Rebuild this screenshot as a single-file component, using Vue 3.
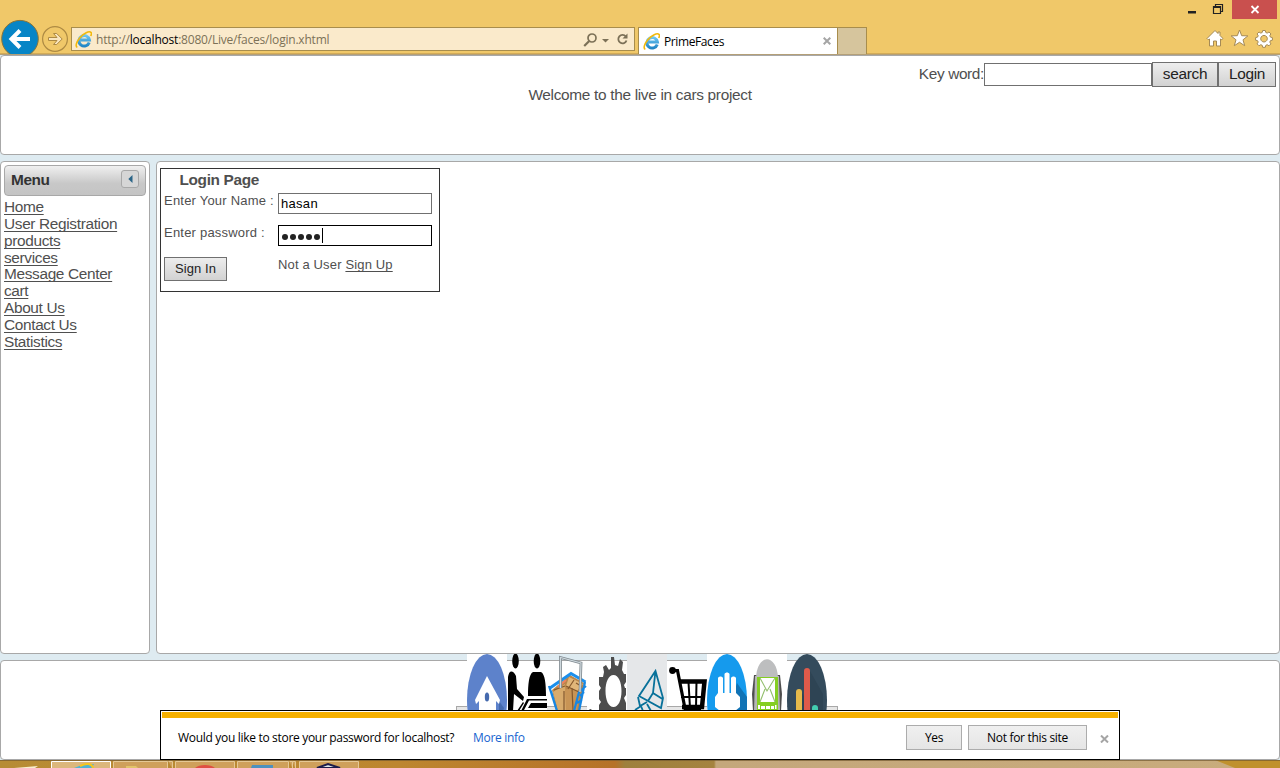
<script setup>
const menuItems = [
  'Home', 'User Registration', 'products', 'services', 'Message Center',
  'cart', 'About Us', 'Contact Us', 'Statistics'
]
</script>

<template>
  <div class="screen">
    <svg class="defs" width="0" height="0" aria-hidden="true">
      <defs>
        <linearGradient id="ieBlue" x1="0" y1="0" x2="0" y2="1">
          <stop offset="0" stop-color="#6cc6f2" /><stop offset="1" stop-color="#2186c6" />
        </linearGradient>
        <symbol id="ie" viewBox="0 0 16 16">
          <path d="M13.400 10.800A5 5 0 1 1 13.600 8.400H5.200" fill="none" stroke="url(#ieBlue)" stroke-width="2.800" />
          <path d="M2.200 15.200C.2 14.600 1 10.600 4.600 6.300S13.300-.2 15 1.200c.7.7.5 2-.2 3.500" fill="none" stroke="#f2b90c" stroke-width="1.500" />
        </symbol>
      </defs>
    </svg>

    <header class="chrome">
      <div class="window-buttons">
        <svg width="90" height="19" viewBox="0 0 90 19">
          <path d="M0 11h8v2.500H0z" fill="#222" />
          <path d="M25.500 6.500h7v7h-7zM25 7.500h8M27.500 6V4.500h7v7H33" fill="none" stroke="#222" stroke-width="1.200" />
          <path d="M44 0h45v19H44z" fill="#c9504e" />
          <path d="M63.500 6l7 7m0-7l-7 7" stroke="#fff" stroke-width="1.800" />
        </svg>
      </div>
      <div class="nav-row">
        <svg class="nav-arrows" width="71" height="35" viewBox="0 0 71 35">
          <circle cx="20" cy="19.700" r="18.300" fill="#0785c6" stroke="#8a7438" />
          <path d="M30 20H12M20 11.500L11.500 20l8.500 8.500" fill="none" stroke="#fff" stroke-width="4" />
          <circle cx="55" cy="20" r="12.400" fill="none" stroke="#ad8a43" stroke-width="1.200" />
          <path d="M48.500 18.500H57l-3.500-4h3.200l5.500 5.500-5.500 5.500h-3.200l3.500-4h-8.500z" fill="#f9e5bd" stroke="#ad8a43" />
        </svg>
        <div class="address">
          <svg class="ie-icon" width="17" height="17"><use href="#ie" /></svg>
          <span class="url">http://<b>localhost</b>:8080/Live/faces/login.xhtml</span>
          <svg class="address-tools" width="48" height="16" viewBox="0 0 48 16">
            <circle cx="9" cy="6" r="4" fill="none" stroke="#7c7157" stroke-width="1.700" />
            <path d="M6 9.200L1.200 14" stroke="#7c7157" stroke-width="2.200" />
            <path d="M19 7h7l-3.500 3.500z" fill="#7c7157" />
            <path d="M42.800 4.500A4.200 4.200 0 1 0 43.500 8.500" fill="none" stroke="#7c7157" stroke-width="1.800" />
            <path d="M44.500 1.500v5h-5z" fill="#7c7157" />
          </svg>
        </div>
        <div class="tab">
          <svg class="ie-icon" width="17" height="17"><use href="#ie" /></svg>
          <span class="tab-title">PrimeFaces</span>
          <svg class="tab-close" width="8" height="8" viewBox="0 0 8 8"><path d="M.7.7l6.600 6.600m0-6.600L.7 7.300" stroke="#a5a5a5" stroke-width="2" /></svg>
        </div>
        <div class="new-tab"></div>
        <svg class="tools" width="68" height="20" viewBox="0 0 68 20">
          <g fill="#fff" stroke="#a58a56" stroke-width="1" stroke-linejoin="round">
            <path d="M9 2.500L1 10.500l1.200 1.200L3.500 11v7h4v-5h3v5h4v-7l1.300.7 1.200-1.200-3-3V4h-2v1.500z" />
            <path d="M33.500 2l2.200 5.700 6.200.2-4.900 3.900 1.700 5.900-5.200-3.400-5.200 3.400 1.700-5.900-4.900-3.900 6.200-.2z" />
            <path fill-rule="evenodd" d="M56.700 2.500h2.600l.5 2 1.400.6 1.800-1.100 1.900 1.900-1.100 1.800.6 1.400 2 .5v2.600l-2 .5-.6 1.400 1.100 1.800-1.900 1.900-1.800-1.100-1.400.6-.5 2h-2.600l-.5-2-1.400-.6-1.800 1.100-1.900-1.900 1.100-1.800-.6-1.400-2-.5V9.600l2-.5.6-1.400-1.100-1.800L53 4l1.800 1.100 1.400-.6zM58 7.400a3.300 3.300 0 1 0 .01 0z" />
          </g>
        </svg>
      </div>
    </header>

    <main class="page">
      <section class="panel north">
        <div class="search-row">
          <span class="key-label">Key word:</span>
          <input class="field key-input" type="text" />
          <button class="btn search-btn">search</button>
          <button class="btn login-btn">Login</button>
        </div>
        <div class="welcome">Welcome to the live in cars project</div>
      </section>

      <div class="middle">
        <aside class="panel west">
          <div class="menu-head">
            <span>Menu</span>
            <i class="collapse"><svg width="5" height="8" viewBox="0 0 5 8"><path d="M4.500 0v8L.3 4z" fill="#2b6587" /></svg></i>
          </div>
          <nav class="menu-list">
            <a v-for="m in menuItems" :key="m">{{ m }}</a>
          </nav>
        </aside>
        <section class="panel center">
          <form class="login" @submit.prevent>
            <h1>Login Page</h1>
            <label>Enter Your Name :</label>
            <input class="field" type="text" value="hasan" />
            <label>Enter password :</label>
            <div class="field password"><i v-for="n in 5" :key="n"></i><b></b></div>
            <button class="btn sign-in">Sign In</button>
            <span class="sign-up">Not a User <a>Sign Up</a></span>
          </form>
        </section>
      </div>

      <section class="panel south">
        <div class="dock">
          <div class="dock-tray"></div>
          <svg class="dock-icons" width="360" height="57" viewBox="0 0 360 57">
            <path d="M0 0h40v57H0zM40 7h40v50H40zM120 7h40v50h-40zM240 0h80v57h-80z" fill="#fff" />
            <g>
              <ellipse cx="20" cy="46" rx="20" ry="46" fill="#5d82cb" />
              <path d="M32 47l5 7-1 3h-4z" fill="#456aae" />
              <path d="M20 22L8 46l1 4 3-3v10h17V47l3 3 1-4z" fill="#fff" />
              <ellipse cx="20" cy="43" rx="2.200" ry="4.500" fill="#456aae" />
            </g>
            <g>
              <ellipse cx="48.500" cy="7" rx="3.300" ry="7.500" />
              <ellipse cx="70" cy="7" rx="3.300" ry="7.500" />
              <path d="M41 57V23c1-7 5-7 8-1l1 13 7 8-1 4-9-7-1 17zM61 42c0-12 1-22 5-24h8c4 2 5 12 5 24zM60 45h20v1.500H62L56.500 57H54zM64 49h16v5H61zM50 57l6-9 1 1-5 8z" />
            </g>
            <g>
              <path d="M85 36l18-15 14 8-4 28H90z" fill="#b98549" />
              <path d="M86 38l12-8 2 27h-9z" fill="#d8ab6c" />
              <path d="M98 36l10-4 5 5-3 20H99z" fill="#c89455" />
              <path d="M102 23l14 7-6 7-11-5z" fill="#e0b679" />
              <path d="M97 37v20M105 34l1 22M87 36l11-4M99 32l13 6M107 26l-6 9M109 29l5 3" stroke="#84582d" stroke-width="1.200" fill="none" />
              <path d="M91 33l8-7" stroke="#ec8260" stroke-width="2" />
              <path d="M83 34l21-14.500L118.500 28" fill="none" stroke="#1b8fec" stroke-width="3" />
              <path d="M82 32l8 25M84 37l6 20M118 28l-6 29M119 32l-7 6-5 19M117 38l-4 4M115 46l-5 3" fill="none" stroke="#1686e3" stroke-width="2.200" />
              <path d="M93.500 34V3.500L114 9l-1 29" fill="none" stroke="#7f898f" stroke-width="2.800" />
              <path d="M93.500 34V3.500L114 9l-1 29" fill="none" stroke="#cfd9de" stroke-width="1.200" />
              <path d="M122 56c1-2 3-1 3 1h-4z" fill="#555" />
            </g>
            <g fill="#4d4d4d">
              <path fill-rule="evenodd" d="M144 3h3l1 8 3 1 2-7 3 3-1 8 2 4h2v8l-2 3 1 3h1v7l-2 3 2 5v8h-27v-6l2-3-2-3v-8l2-3-2-3v-8h4l1-5-1-5 3-2 3 5 2-2zM146.500 21c-5 0-8 7-8 16s3 16 8 16 8-7 8-16-3-16-8-16z" />
            </g>
            <path d="M160 0h40v57h-40z" fill="#e5e7e9" />
            <g fill="none" stroke="#08719a" stroke-width="1.800">
              <path d="M188.500 17L196 44l-2 10-22-12zM188.500 17l-2.500 22 9.500 6M186 39l-5 8M171 43l2 9 7-4M168 56l6-4 2 5M180 50l4 7" />
            </g>
            <g>
              <circle cx="205.500" cy="16.500" r="3.400" />
              <path d="M206 16.500h4.500l8 40.500" fill="none" stroke="#000" stroke-width="3.200" />
              <path d="M212 27.500h25.500L235 53h-20" fill="none" stroke="#000" stroke-width="4.500" />
              <path d="M214 43h22M221.500 28l1.500 26M229.500 28l-.5 26" fill="none" stroke="#000" stroke-width="2" />
              <path d="M217 55h17" stroke="#000" stroke-width="3" />
            </g>
            <g>
              <path d="M240 0h40v57h-40z" fill="#fff" />
              <ellipse cx="260" cy="46" rx="20" ry="46" fill="#159aed" />
              <path d="M270 29l10 14v14h-19z" fill="#1173b5" />
              <path d="M251 24c1-2 4-2 5 0v15h1.500V20c1-2 4-2 5 0v19h1.500V24c1-2 4-2 5 0v15l4 4v10l-5 4h-15l-5-4V43l3-4z" fill="#fff" />
            </g>
            <g>
              <path d="M286 57l-1-17 2-19h26l2 19-1 17z" fill="#4e4e4e" /><path d="M288 22h24l1 35h-26z" fill="#b5b5b5" />
              <path d="M289 24c1-25 21-25 22 0z" fill="#bdbebf" />
              <path d="M290 57V23h21v34z" fill="#85ce22" />
              <path d="M293 24h15v24h-15z" fill="#fff" />
              <path d="M293 24l7 13 8-13M293 48l5-13m10 13l-5-13" fill="none" stroke="#93bf6e" stroke-width="1.100" />
              <path d="M291 51h2v4h-2zM294 52h4v3h-4zM299 52h4v3h-4zM304 52h3v3h-3zM308 51h1.500v4H308z" fill="#fff" />
            </g>
            <g>
              <ellipse cx="340" cy="46" rx="20" ry="46" fill="#344b5c" />
              <path d="M335 39l10 18h-10zM343 17l13 23v17h-13z" fill="#2e4454" />
              <path d="M329 57V38a3 3 0 0 1 6 0v19z" fill="#e6ba4b" />
              <path d="M337 57V17a3 3 0 0 1 6 0v40z" fill="#df5a4a" />
              <path d="M345 57v-3a3 3 0 0 1 6 0v3z" fill="#43cdb0" />
            </g>
          </svg>
        </div>
      </section>

      <div class="notice">
        <div class="stripe"></div>
        <div class="notice-row">
          <span class="question">Would you like to store your password for localhost?</span>
          <a class="more">More info</a>
          <button class="nbtn yes">Yes</button>
          <button class="nbtn never">Not for this site</button>
          <svg class="notice-close" width="9" height="8" viewBox="0 0 9 8"><path d="M1 .5l7 7m0-7l-7 7" stroke="#a5a5a5" stroke-width="2" /></svg>
        </div>
      </div>
    </main>

    <footer class="taskbar">
      <svg width="1280" height="8" viewBox="0 0 1280 8">
        <path d="M1215 0h65v8h-45z" fill="#c0912d" />
        <path d="M0 0h1280v1H0z" fill="#735a32" opacity=".7" />
        <path d="M14 8l24-2-3 2z" fill="#f8efcf" />
        <g fill="#cfa05b" stroke="#e5c894">
          <path d="M51.500 9V1.500h59V9z" fill="#dcb77c" stroke="#fff" />
          <path d="M113.500 9V1.500h54V9M168.500 1.500h4V9M175.500 9V1.500h59V9zM237.500 9V1.500h51V9M289.500 1.500h3V9M292.500 1.500h3V9M299.500 9V1.500h59V9z" />
        </g>
        <path d="M74 8l8-3 12-1-2 4z" fill="#50b4d2" /><path d="M80 6c6-3 12-3 13 2" fill="none" stroke="#f7c51c" stroke-width="2" />
        <path d="M126 8V6h10l2 2z" fill="#e2c46a" />
        <path d="M195 8c4-4 16-4 20 0z" fill="#df4f43" />
        <path d="M252 5h21v3h-22z" fill="#4d91bf" />
        <path d="M317 8l11-4 12 4z" fill="#dfe8e8" stroke="#1c1c4b" stroke-width="2" />
      </svg>
    </footer>
  </div>
</template>

<style>
html, body { margin: 0; overflow: hidden; }
</style>

<style scoped>
* { box-sizing: border-box; }
.screen {
  width: 1280px; height: 768px; overflow: hidden;
  display: grid; grid-template-rows: 55px 705px 8px;
  font-family: "Liberation Sans", Arial, sans-serif; color: #4f4f4f;
}
.defs { position: absolute; }
svg { display: block; flex: none; }
.chrome { background: #f0c869; border-bottom: 1px solid #b4a078; box-shadow: inset 0 -1px #d3ab57; font-family: "Open Sans", "Noto Sans", sans-serif; }
.window-buttons { height: 19px; display: flex; justify-content: flex-end; margin-right: 2px; }
.nav-row { height: 35px; display: flex; }
.address {
  width: 564px; height: 24px; margin-top: 8px; padding: 0 3px 0 3px;
  display: flex; align-items: center; border: 1px solid #a88d4c; background: #faeacb;
}
.url { margin: 1px 0 0 4px; font-size: 12px; letter-spacing: -0.21px; color: #7c7157; white-space: nowrap; }
.url b { font-weight: 400; color: #000; }
.address-tools { margin: 1px 0 0 auto; }
.tab {
  width: 200px; height: 27px; margin: 8px 0 0 3px; padding: 0 6px 0 4px;
  display: flex; align-items: center; background: #fff; border: 1px solid #a88d4c; border-bottom: 0;
}
.tab-title { margin-left: 4px; font-size: 12px; letter-spacing: -0.4px; color: #000; }
.tab-close { margin-left: auto; }
.new-tab { width: 29px; height: 27px; margin-top: 8px; background: #d6c59d; border: 1px solid #a88d4c; border-left: 0; border-bottom: 0; }
.tools { margin: 9px 6px 0 auto; }

.page {
  position: relative; background: #deebf1;
  display: grid; grid-template-rows: 100px 493px 100px; row-gap: 6px;
}
.panel { background: #fff; border: 1px solid #a8a8a8; border-radius: 4px; }
.search-row { display: flex; align-items: flex-start; justify-content: flex-end; padding: 6px 3px 0 0; height: 30px; }
.key-label { font-size: 15.400px; line-height: 24px; letter-spacing: -0.36px; }
.field { border: 1px solid #707070; background: #fff; border-radius: 0; outline: 0; margin: 0; }
.key-input { width: 168px; height: 23px; margin-top: 1px; }
.btn {
  border: 1px solid #707070; border-radius: 0; margin: 0; padding: 0; height: 25px;
  background: linear-gradient(#ededed, #d2d2d2); color: #222; font-family: inherit; font-size: 15.400px; letter-spacing: -0.32px;
}
.search-btn, .login-btn { padding-bottom: 2px; }
.search-btn { width: 66px; }
.login-btn { width: 58px; }
.welcome { text-align: center; font-size: 15.400px; line-height: 17px; letter-spacing: -0.31px; }
.middle { display: grid; grid-template-columns: 150px 1124px; column-gap: 6px; }
.west { padding: 3px; }
.menu-head {
  height: 31px; padding: 0 6px 2px; display: flex; justify-content: space-between; align-items: center;
  border: 1px solid #a8a8a8; border-radius: 4px; background: linear-gradient(#f0f0f0, #c8c8c8 60%, #c4c4c4);
  font-size: 15.400px; font-weight: 700; color: #333; letter-spacing: -0.4px;
}
.collapse {
  width: 18px; height: 18px; margin-top: -2px; display: flex; align-items: center; justify-content: center;
  border: 1px solid #a8a8a8; border-radius: 3px; background: #d6d6d6;
}
.menu-list { display: flex; flex-direction: column; align-items: flex-start; padding-top: 3px; }
.menu-list a { font-size: 15.400px; line-height: 16.850px; letter-spacing: -0.34px; text-decoration: underline; text-underline-offset: 2px; text-decoration-thickness: 1px; text-decoration-skip-ink: none; white-space: nowrap; }
.center { padding: 6px 3px; }
.login {
  width: 280px; height: 124px; padding: 4px 7px 0 3px;
  border: 1px solid #333; display: grid; grid-template-columns: 114px 154px; grid-template-rows: 20px 32px 32px 27px; align-items: start;
  font-size: 13px;
}
.login h1 { grid-column: 1 / -1; margin: -1px 0 0 15.500px; font-size: 15.400px; line-height: 16px; letter-spacing: -0.35px; }
.login label { line-height: 15px; letter-spacing: 0.21px; white-space: nowrap; }
.login .field { width: 154px; height: 21px; padding: 0 3px 1px 2px; font: 13px "Liberation Sans", Arial, sans-serif; color: #000; letter-spacing: 0.3px; }
.login .password { border-color: #000; padding-left: 3px; display: flex; align-items: center; }
.password i { width: 6px; height: 6px; margin: 3px 2px 0 0; border-radius: 50%; background: #222; }
.password b { width: 1px; height: 15px; margin-top: 1px; background: #000; }
.login .sign-in { width: 63px; height: 24px; padding-bottom: 1px; font-size: 13px; letter-spacing: 0.1px; }
.sign-up { line-height: 15px; letter-spacing: 0.15px; }
.sign-up a { text-decoration: underline; text-underline-offset: 2px; text-decoration-skip-ink: none; }

.south { position: relative; }
.dock { position: absolute; left: 455px; top: -7px; width: 382px; height: 62px; padding-left: 11px; }
.dock-tray { position: absolute; left: 0; bottom: 0; width: 382px; height: 10px; border: 1px solid #a8a8a8; background: #e6e6e6; }
.dock-icons { position: relative; }
.notice { position: absolute; left: 160px; bottom: 0; width: 960px; height: 50px; background: #fff; border: 1px solid #000; padding: 1px; font-family: "Open Sans", "Noto Sans", sans-serif; color: #000; }
.stripe { height: 6px; background: #f5b000; }
.notice-row { height: 38px; display: flex; align-items: center; padding: 0 9px 0 16px; font-size: 12px; letter-spacing: -0.31px; }
.question { width: 295px; white-space: nowrap; }
.more { color: #1664cf; }
.nbtn { height: 25px; padding: 0; border: 1px solid #acacac; background: linear-gradient(#f0f0f0, #e5e5e5); color: #000; font: inherit; letter-spacing: inherit; }
.yes { width: 56px; margin-left: auto; }
.never { width: 119px; margin: 0 13px 0 6px; }
.notice-close { margin-top: 4px; }
.taskbar { background: linear-gradient(90deg, #b78c35, #bd8630 400px, #b67229 615px, #9e803d 625px, #a5833f 714px, #c4a77b 716px, #c9ac7c 1280px); }
</style>
